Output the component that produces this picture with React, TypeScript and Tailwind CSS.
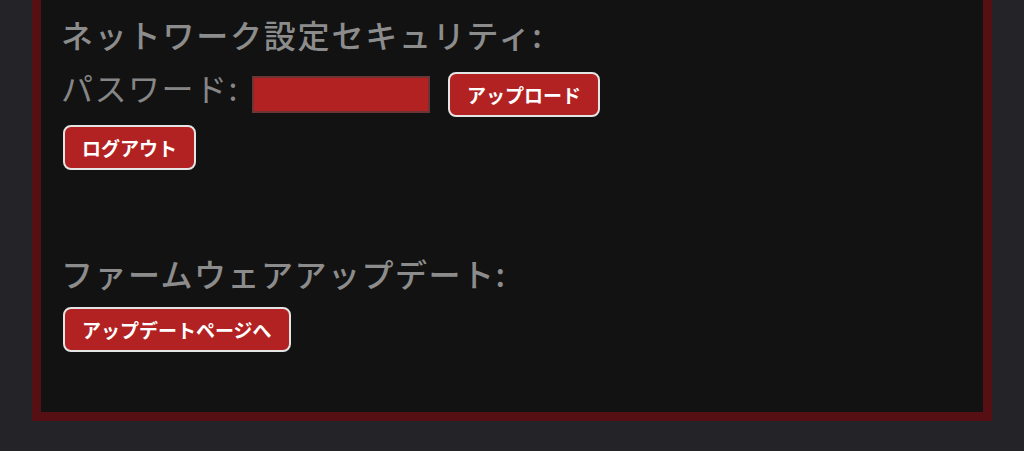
import React from "react";

const btn =
  "h-[45px] px-[17px] rounded-lg border-2 border-[#e4e4e4] bg-[#b22222] text-white text-[19px] font-bold leading-none flex items-center justify-center whitespace-nowrap";

export default function App() {
  return (
    <div
      className="min-h-[451px] w-full bg-[#242428] px-[32px] pb-[30px]"
      style={{ fontFamily: '"Noto Sans CJK JP", "Noto Sans", sans-serif' }}
    >
      <div className="border-[9px] border-t-0 border-[#560f12] bg-[#121212] px-[20px] pt-[14px] pb-[60px]">
        <h2 className="text-[32px] leading-[40px] tracking-[1.8px] font-medium text-[#8c8c8c]">
          ネットワーク設定セキュリティ:
        </h2>
        <div className="mt-[18px] flex items-start">
          <span className="text-[32px] leading-[30px] tracking-[1.5px] text-[#868686] whitespace-nowrap">
            パスワード:
          </span>
          <input
            type="password"
            className="ml-[13px] mt-[4px] w-[178px] h-[37px] bg-[#b22222] border-2 border-[#6b3535] outline-none"
          />
          <button className={`${btn} ml-[18px]`}>アップロード</button>
        </div>
        <div className="mt-[8px] flex">
          <button className={`${btn} ml-[2px]`}>ログアウト</button>
        </div>
        <h2 className="mt-[83px] text-[32px] leading-[40px] tracking-[1.5px] font-medium text-[#8c8c8c]">
          ファームウェアアップデート:
        </h2>
        <div className="mt-[14px] flex">
          <button className={`${btn} ml-[2px]`}>アップデートページへ</button>
        </div>
      </div>
    </div>
  );
}
